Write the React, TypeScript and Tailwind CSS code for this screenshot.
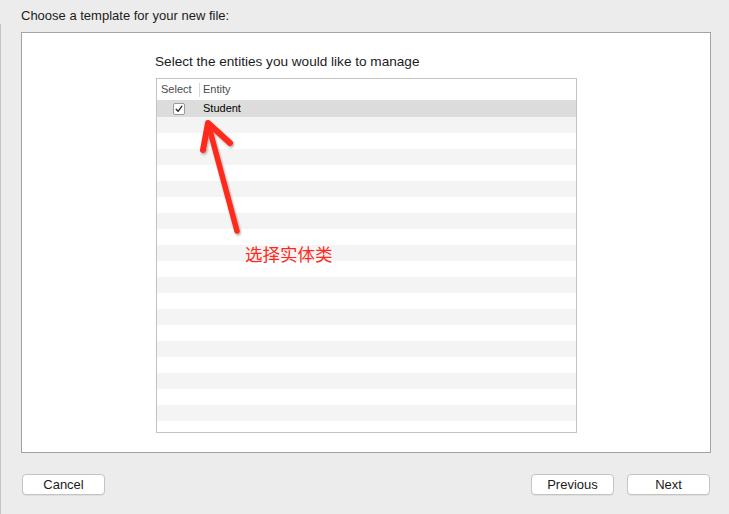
import React from "react";

const ROWS = Array.from({ length: 20 }, (_, i) => i);

function MacButton({ label, className = "" }: { label: string; className?: string }) {
  return (
    <button className={`h-[21px] w-[83px] rounded-[4px] border border-[#c4c4c4] bg-white text-[13px] leading-[19px] text-[#1a1a1a] shadow-[0_1px_0_rgba(0,0,0,0.06)] ${className}`}>
      {label}
    </button>
  );
}

export default function App() {
  return (
    <div className="relative h-[514px] w-[729px] overflow-hidden bg-[#ececec] px-[21px] font-['Liberation_Sans',Arial,sans-serif]">
      {/* window edge */}
      <div className="absolute left-0 top-[24px] h-[490px] w-px bg-[#c6c6c6]" />

      <p className="pt-[8px] text-[13px] leading-[16px] text-[#1c1c1c]">Choose a template for your new file:</p>

      <div className="mt-[8px] h-[421px] w-[690px] border border-[#a3a3a3] bg-white pl-[133px] pt-[21px]">
        <p className="text-[13.6px] leading-[16px] text-[#1c1c1c]">Select the entities you would like to manage</p>

        <div className="mt-[8px] ml-px h-[355px] w-[421px] overflow-hidden border border-[#c3c3c3] bg-white">
          <div className="flex h-[21px] items-center text-[11px] text-[#4a4a4a]">
            <div className="flex h-[14px] w-[43px] items-center border-r border-[#d8d8d8] pl-[4px]">Select</div>
            <div className="pl-[3px]">Entity</div>
          </div>

          <div className="flex h-[17px] items-center bg-[#dcdcdc] text-[11px] text-black">
            <div className="flex w-[43px] justify-center">
              <span className="flex h-[12px] w-[12px] items-center justify-center rounded-[2px] border border-[#9a9a9a] bg-white">
                <svg width="8" height="8" viewBox="0 0 8 8">
                  <path d="M1.2 4.3 L3.1 6.3 L6.9 1.2" fill="none" stroke="#2b2b2b" strokeWidth="1.4" strokeLinecap="round" strokeLinejoin="round" />
                </svg>
              </span>
            </div>
            <div className="pl-[3px]">Student</div>
          </div>

          {ROWS.map((i) => (
            <div key={i} className={`h-[16px] ${i % 2 === 0 ? "bg-[#f4f4f4]" : "bg-white"}`} />
          ))}
        </div>
      </div>

      <div className="mt-[21px] flex w-[690px] items-center">
        <MacButton label="Cancel" className="ml-px" />
        <div className="flex-1" />
        <MacButton label="Previous" />
        <MacButton label="Next" className="ml-[13px] mr-px" />
      </div>

      {/* annotation */}
      <svg className="pointer-events-none absolute left-0 top-0" width="729" height="514">
        <defs>
          <filter id="sh" x="-20%" y="-20%" width="140%" height="140%">
            <feDropShadow dx="1" dy="1.5" stdDeviation="1.2" floodColor="#000" floodOpacity="0.35" />
          </filter>
        </defs>
        <g filter="url(#sh)" stroke="#ff2a1e" fill="none" strokeLinecap="round" strokeLinejoin="round">
          <path d="M209 127 L237 231" strokeWidth="5.5" />
          <path d="M203 150 L208 123 L230 143" strokeWidth="6" />
        </g>
      </svg>
      <span className="absolute left-[245px] top-[245px] text-[17.5px] leading-[18px] text-[#ff2a1e] font-['Noto_Sans_CJK_SC',sans-serif]">选择实体类</span>
    </div>
  );
}
